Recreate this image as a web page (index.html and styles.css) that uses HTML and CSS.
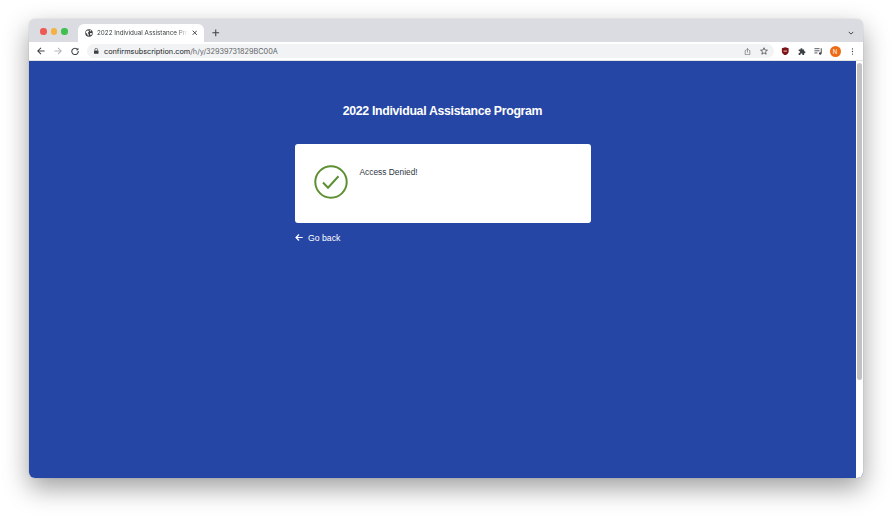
FILE: index.html
```html
<!DOCTYPE html>
<html lang="en">
<head>
<meta charset="utf-8">
<title>2022 Individual Assistance Program</title>
<link rel="stylesheet" href="styles.css">
</head>
<body>
<div class="window">
  <div class="tabstrip">
    <div class="lights"><span class="light red"></span><span class="light yellow"></span><span class="light green"></span></div>
    <div class="tab">
      <svg class="globe" viewBox="0 0 16 16"><circle cx="8" cy="8" r="7.5" fill="#3c4043"/><path d="M3 3.5 7 3 8 5 5.5 8 7 9.5 7.5 13 6 14 4 9.5 1.5 7ZM9.5 1.5 13 3.5 11 5 9.5 4ZM10 8 14.5 8.5 12.5 12.5 10.5 12Z" fill="#fff"/></svg>
      <span class="tab-title">2022 Individual Assistance Pro</span>
      <svg class="tab-close" viewBox="0 0 8 8"><path d="M1 1 7 7M7 1 1 7" stroke="#3c4043" stroke-width="1.4" fill="none"/></svg>
    </div>
    <svg class="newtab" viewBox="0 0 10 10"><path d="M5 .5v9M.5 5h9" stroke="#3c4043" stroke-width="1.4" fill="none"/></svg>
    <svg class="chevron" viewBox="0 0 8 5"><path d="M1 1 4 4 7 1" stroke="#3c4043" stroke-width="1.3" fill="none"/></svg>
  </div>
  <div class="toolbar">
    <svg class="nav" viewBox="0 0 10 10"><path d="M9.5 5H1M5 1 1 5 5 9" stroke="#3c4043" stroke-width="1.3" fill="none"/></svg>
    <svg class="nav" viewBox="0 0 10 10"><path d="M9.5 5H1M5 1 1 5 5 9" stroke="#b3b6ba" stroke-width="1.3" fill="none" transform="rotate(180 5 5)"/></svg>
    <svg class="nav" viewBox="0 0 10 10"><path d="M8.3 3.2A4 4 0 1 0 9 5" stroke="#3c4043" stroke-width="1.3" fill="none"/><path d="M9.2.8V4H6Z" fill="#3c4043"/></svg>
    <div class="omnibox">
      <svg class="lock" viewBox="0 0 6 8"><path d="M1.2 3.4V2.2a1.8 1.8 0 0 1 3.6 0v1.2" stroke="#3c4043" fill="none" stroke-width=".9"/><rect y="3.2" width="6" height="4.6" rx=".7" fill="#3c4043"/></svg>
      <span class="url"><span class="domain">confirmsubscription.com</span>/h/y/32939731829BC00A</span>
      <svg class="omni-icon" viewBox="0 0 10 10"><path d="M3 3.5H1.7v6h6.6v-6H7M5 6.5V.8M3.3 2.4 5 .8l1.7 1.6" stroke="#5f6368" stroke-width=".9" fill="none"/></svg>
      <svg class="omni-icon star" viewBox="0 0 10 10"><path d="M5 .9 6.2 3.8l3.1.2-2.4 2 .8 3L5 7.4 2.3 9l.8-3-2.4-2 3.1-.2Z" stroke="#3c4043" stroke-width=".9" fill="none"/></svg>
    </div>
    <div class="extensions">
      <svg class="ext" viewBox="0 0 10 10"><path d="M5 .3 9 1.5v3.6C9 7.4 7.2 9 5 9.8 2.8 9 1 7.4 1 5.1V1.5Z" fill="#7c1416"/><path d="M3 4h4v1.5H3Z" fill="#d9a0a0"/></svg>
      <svg class="ext" viewBox="0 0 10 10"><path d="M.8 3h2.100a1.200 1.200 0 1 1 2.300 0h2v2a1.200 1.200 0 1 1 0 2.300v2H5.100a1.200 1.200 0 1 0-2.200 0H.8V7a1.200 1.200 0 1 0 0-2.300Z" fill="#3c4043"/></svg>
      <svg class="ext" viewBox="0 0 10 10"><path d="M.5 2h6M.5 4.5h6M.5 7h3.5" stroke="#3c4043" stroke-width="1" fill="none"/><path d="M8.5 1.500v6" stroke="#3c4043" stroke-width="1.100" fill="none"/><circle cx="7.300" cy="7.700" r="1.400" fill="#3c4043"/></svg>
      <span class="avatar">N</span>
      <svg class="dots" viewBox="0 0 3 11"><circle cx="1.5" cy="1.5" r="1" fill="#3c4043"/><circle cx="1.5" cy="5.5" r="1" fill="#3c4043"/><circle cx="1.5" cy="9.5" r="1" fill="#3c4043"/></svg>
    </div>
  </div>
  <div class="viewport">
    <main class="page">
      <h1 class="title">2022 Individual Assistance Program</h1>
      <section class="card">
        <svg class="check" viewBox="0 0 34 34"><circle cx="17" cy="17" r="15.7" stroke="#5d9030" stroke-width="2" fill="none"/><path d="M9 17.500 14 22.700 24.500 11.300" stroke="#5d9030" stroke-width="2" fill="none"/></svg>
        <p class="message">Access Denied!</p>
      </section>
      <a class="back" href="#">
        <svg class="back-arrow" viewBox="0 0 9 8"><path d="M8.800 4H1.200M4.500.6 1.100 4l3.400 3.400" stroke="#fff" stroke-width="1.400" fill="none"/></svg>
        Go back
      </a>
    </main>
    <div class="scrollbar"><div class="thumb"></div></div>
  </div>
</div>
</body>
</html>
```

FILE: styles.css
```css
* { box-sizing: border-box; }
html, body { margin: 0; height: 100%; }
body {
  background: #fff;
  padding: 19px 30px 39px 29px;
  font-family: "Inter", "Liberation Sans", sans-serif;
  overflow: hidden;
}
.window {
  height: 459px;
  display: flex;
  flex-direction: column;
  border-radius: 6px;
  overflow: hidden;
  box-shadow: 0 10px 26px rgba(0, 0, 0, .38), 0 0 1px rgba(0, 0, 0, .35);
}
.tabstrip {
  height: 23px;
  flex: none;
  display: flex;
  align-items: flex-end;
  background: #dadce1;
}
.lights {
  display: flex;
  gap: 4px;
  align-self: flex-start;
  padding: 9px 0 0 11px;
  width: 49px;
}
.light { width: 6.5px; height: 6.5px; border-radius: 50%; }
.red { background: #ee5a52; }
.yellow { background: #f4b23e; }
.green { background: #3fc04c; }
.tab {
  width: 126px;
  height: 18px;
  background: #fff;
  border-radius: 6px 6px 0 0;
  display: flex;
  align-items: center;
  padding: 0 7px;
}
.globe { width: 8px; height: 8px; flex: none; margin-right: 4px; }
.tab-title {
  flex: 1;
  min-width: 0;
  white-space: nowrap;
  overflow: hidden;
  font-size: 6.3px;
  color: #3c4043;
  -webkit-mask-image: linear-gradient(90deg, #000 88%, transparent 100%);
  mask-image: linear-gradient(90deg, #000 88%, transparent 100%);
}
.tab-close { width: 5.5px; height: 5.5px; flex: none; margin-left: 4px; }
.newtab { width: 7.5px; height: 7.5px; margin: 0 auto 5.5px 8px; }
.chevron { width: 6px; height: 4px; margin: 0 9px 7px 0; }
.toolbar {
  height: 19px;
  flex: none;
  display: flex;
  align-items: center;
  gap: 9px;
  padding-left: 8px;
  background: #fff;
  border-bottom: 1px solid #e3e4e6;
}
.nav { width: 8px; height: 8px; flex: none; }
.omnibox {
  flex: none;
  width: 687px;
  height: 14px;
  margin-left: -1px;
  border-radius: 7px;
  background: #f1f3f4;
  display: flex;
  align-items: center;
  padding: 0 6px 0 7px;
}
.lock { width: 4.5px; height: 6px; flex: none; margin-right: 5.5px; }
.url { flex: 1; font-size: 7.3px; color: #5f6368; white-space: nowrap; }
.domain { color: #202124; }
.omni-icon { width: 7px; height: 7px; flex: none; }
.omni-icon.star { margin-left: 9px; width: 8px; height: 8px; }
.extensions { display: flex; align-items: center; gap: 8px; margin-left: -2px; }
.ext { width: 8.5px; height: 8.5px; flex: none; }
.avatar {
  width: 11px;
  height: 11px;
  border-radius: 50%;
  background: #ee6a14;
  color: #fff;
  font-size: 6px;
  line-height: 11px;
  text-align: center;
  flex: none;
  margin-left: -1px;
}
.dots { width: 3px; height: 7px; flex: none; margin-left: 2px; }
.viewport { flex: 1; min-height: 0; display: flex; background: #2546a5; }
.page {
  flex: 1;
  display: flex;
  flex-direction: column;
  align-items: center;
  font-family: "Liberation Sans", Arial, sans-serif;
}
.title {
  margin: 42px 0 25px;
  font-size: 12.3px;
  letter-spacing: -.31px;
  line-height: 16px;
  font-weight: 700;
  color: #fff;
}
.card {
  width: 296px;
  height: 78.5px;
  border-radius: 3px;
  background: #fff;
  display: flex;
  align-items: flex-start;
  padding: 21px 0 0 19px;
}
.check { width: 34px; height: 34px; flex: none; }
.message {
  margin: 1px 0 0 12px;
  font-size: 8.4px;
  line-height: 12px;
  color: #2f3642;
}
.back {
  align-self: flex-start;
  margin: 9px 0 0 266px;
  display: flex;
  align-items: center;
  gap: 5px;
  font-size: 8.7px;
  line-height: 12px;
  color: #fff;
  text-decoration: none;
}
.back-arrow { width: 8px; height: 7px; flex: none; }
.scrollbar { width: 7px; flex: none; background: #fff; padding: 2px 1px 0; }
.thumb { height: 317px; border-radius: 3px; background: #c1c1c1; }
```
